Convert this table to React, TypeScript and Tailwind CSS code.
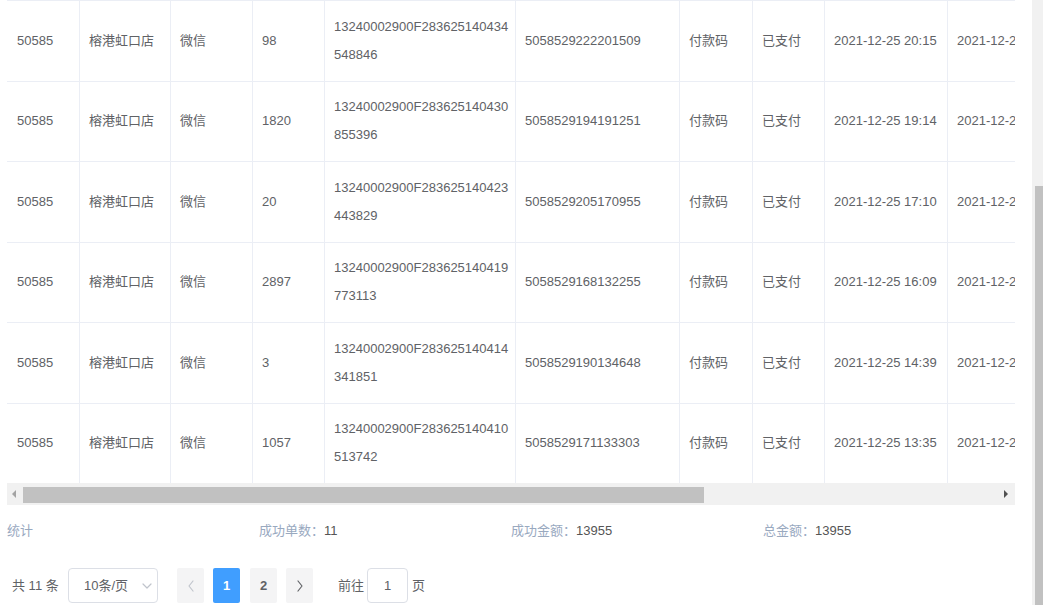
import React from 'react'

interface Row {
  amount: string
  orderA: string
  orderB: string
  tradeNo: string
  time: string
}

const rows: Row[] = [
  { amount: '98', orderA: '13240002900F283625140434', orderB: '548846', tradeNo: '5058529222201509', time: '2021-12-25 20:15' },
  { amount: '1820', orderA: '13240002900F283625140430', orderB: '855396', tradeNo: '5058529194191251', time: '2021-12-25 19:14' },
  { amount: '20', orderA: '13240002900F283625140423', orderB: '443829', tradeNo: '5058529205170955', time: '2021-12-25 17:10' },
  { amount: '2897', orderA: '13240002900F283625140419', orderB: '773113', tradeNo: '5058529168132255', time: '2021-12-25 16:09' },
  { amount: '3', orderA: '13240002900F283625140414', orderB: '341851', tradeNo: '5058529190134648', time: '2021-12-25 14:39' },
  { amount: '1057', orderA: '13240002900F283625140410', orderB: '513742', tradeNo: '5058529171133303', time: '2021-12-25 13:35' },
]

const cell = 'shrink-0 h-full flex items-center border-r border-[#ebeef5] pl-[9px] whitespace-nowrap'

function TableRow({ row }: { row: Row }) {
  return (
    <div className="flex h-[80.5px] border-b border-[#ebeef5] box-border">
      <div className={`${cell} w-[73px] pl-[10px]`}>50585</div>
      <div className={`${cell} w-[91px]`}>榕港虹口店</div>
      <div className={`${cell} w-[82px]`}>微信</div>
      <div className={`${cell} w-[72px]`}>{row.amount}</div>
      <div className={`${cell} w-[191px]`}>
        <div>
          <div>{row.orderA}</div>
          <div>{row.orderB}</div>
        </div>
      </div>
      <div className={`${cell} w-[164px]`}>{row.tradeNo}</div>
      <div className={`${cell} w-[73px]`}>付款码</div>
      <div className={`${cell} w-[72px]`}>已支付</div>
      <div className={`${cell} w-[123px]`}>{row.time}</div>
      <div className={`${cell} w-[150px]`}>{row.time}</div>
    </div>
  )
}

function Chevron({ dir, color }: { dir: 'left' | 'right' | 'down'; color: string }) {
  const pts = dir === 'left' ? '6,1 2,6 6,11' : dir === 'right' ? '2,1 6,6 2,11' : '1,2 5,6 9,2'
  const size = dir === 'down' ? { w: 10, h: 8 } : { w: 8, h: 12 }
  return (
    <svg width={size.w} height={size.h} viewBox={`0 0 ${size.w} ${size.h}`} fill="none">
      <polyline points={pts} stroke={color} strokeWidth="1.2" strokeLinecap="round" strokeLinejoin="round" />
    </svg>
  )
}

export default function App() {
  return (
    <div className="flex w-[1043px] h-[605px] overflow-hidden bg-white text-[13px] text-[#606266] font-['Liberation_Sans','Noto_Sans_CJK_SC',sans-serif]">
      <div className="w-[1032px] shrink-0 pl-[7px]">
        <div className="w-[1008px]">
          {/* table body */}
          <div className="h-[483px] overflow-hidden border-t border-[#ebeef5] leading-[28px]">
            {rows.map(r => (
              <TableRow key={r.orderA} row={r} />
            ))}
          </div>

          {/* horizontal scrollbar */}
          <div className="relative h-[22px] bg-[#f1f1f1]">
            <div className="absolute left-[5px] top-[7px] w-0 h-0 border-y-[4px] border-y-transparent border-r-[4px] border-r-[#a3a3a3]" />
            <div className="absolute left-[16px] top-[4px] w-[681px] h-[16px] bg-[#c1c1c1]" />
            <div className="absolute right-[7px] top-[7px] w-0 h-0 border-y-[4px] border-y-transparent border-l-[4px] border-l-[#505050]" />
          </div>

          {/* stats */}
          <div className="grid grid-cols-4 h-[52px] items-center text-[13px]">
            <span className="text-[#99a9bf]">统计</span>
            <span>
              <span className="text-[#99a9bf]">成功单数：</span>
              <span className="text-[#555]">11</span>
            </span>
            <span>
              <span className="text-[#99a9bf]">成功金额：</span>
              <span className="text-[#555]">13955</span>
            </span>
            <span>
              <span className="text-[#99a9bf]">总金额：</span>
              <span className="text-[#555]">13955</span>
            </span>
          </div>

          {/* pagination */}
          <div className="flex items-center mt-[11px] h-[35px] pl-[5px]">
            <span className="w-[56px] shrink-0">共 11 条</span>
            <div className="w-[90px] h-[35px] shrink-0 flex items-center justify-between border border-[#dcdfe6] rounded-[4px] pl-[15px] pr-[5px]">
              <span>10条/页</span>
              <Chevron dir="down" color="#c0c4cc" />
            </div>
            <button className="ml-[19px] w-[27px] h-[35px] flex items-center justify-center bg-[#f4f4f5] rounded-[2px]">
              <Chevron dir="left" color="#c0c4cc" />
            </button>
            <button className="ml-[9px] w-[27px] h-[35px] flex items-center justify-center bg-[#409eff] rounded-[2px] text-white font-bold">
              1
            </button>
            <button className="ml-[10px] w-[27px] h-[35px] flex items-center justify-center bg-[#f4f4f5] rounded-[2px] text-[#606266] font-bold">
              2
            </button>
            <button className="ml-[9px] w-[27px] h-[35px] flex items-center justify-center bg-[#f4f4f5] rounded-[2px]">
              <Chevron dir="right" color="#606266" />
            </button>
            <span className="ml-[25px] w-[29px] shrink-0">前往</span>
            <div className="w-[41px] h-[35px] shrink-0 flex items-center justify-center border border-[#dcdfe6] rounded-[4px]">
              1
            </div>
            <span className="ml-[4px]">页</span>
          </div>
        </div>
      </div>

      {/* page scrollbar */}
      <div className="w-[11px] shrink-0 h-full bg-[#f1f1f1] pt-[186px] pl-[3px]">
        <div className="h-full bg-[#c1c1c1]" />
      </div>
    </div>
  )
}
